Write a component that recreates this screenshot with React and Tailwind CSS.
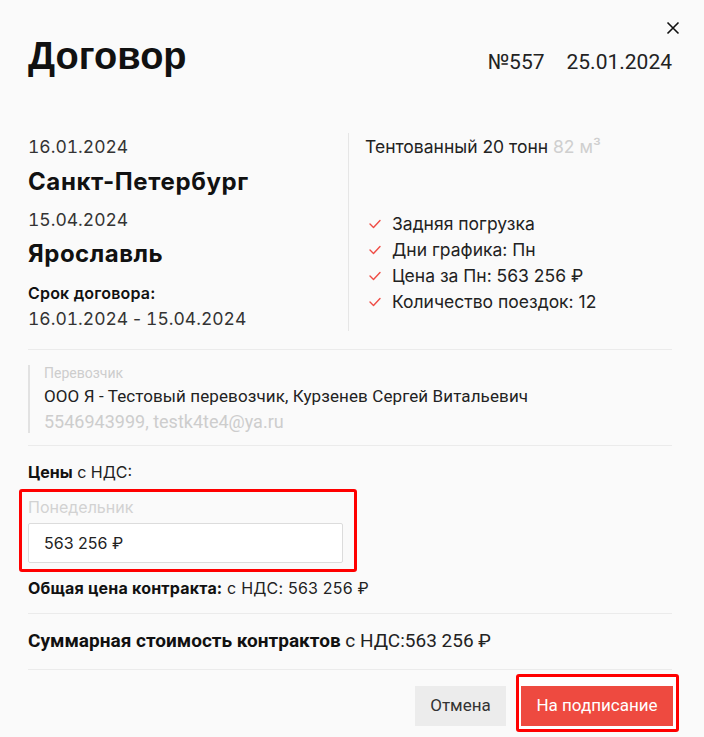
import React from "react";

const Check = () => (
  <svg width="12" height="10" viewBox="0 0 12 10" className="shrink-0">
    <polyline points="1,5 4.5,8.5 11,1.5" fill="none" stroke="#ef4c45" strokeWidth="1.4" strokeLinecap="round" strokeLinejoin="round" />
  </svg>
);

const T = ({ children }) => <span style={{ fontVariantNumeric: "tabular-nums" }}>{children}</span>;

export default function App() {
  const inter = { fontFamily: "Inter, 'Noto Sans', sans-serif" };
  const roboto = { fontFamily: "Roboto, sans-serif" };
  return (
    <div className="relative w-[704px] h-[737px] bg-[#fafafa] overflow-hidden text-[#222]">
      <button className="absolute top-[21px] right-[24px] w-[14px] h-[14px] flex items-center justify-center">
        <svg width="14" height="14" viewBox="0 0 14 14">
          <path d="M1.5 1.5 L12.5 12.5 M12.5 1.5 L1.5 12.5" stroke="#111" strokeWidth="1.6" />
        </svg>
      </button>
      <div className="flex flex-col pl-[28px] pr-[32px] pt-[36px]">
        <div className="flex items-baseline justify-between">
          <h1 className="text-[38px] leading-[40px] font-bold text-[#111]" style={{ fontFamily: "'Liberation Sans', Arial, sans-serif" }}>
            Договор
          </h1>
          <div className="flex gap-[22px] text-[21px] leading-[24px] text-[#222]" style={roboto}>
            <span>№557</span>
            <span>25.01.2024</span>
          </div>
        </div>

        <div className="mt-[57px] flex" style={inter}>
          <div className="w-[321px] border-r border-[#e6e6e6] flex flex-col pt-[2px]">
            <div className="text-[17.5px] leading-[24px] text-[#333]"><T>16.01.2024</T></div>
            <div className="mt-[8px] text-[24px] leading-[30px] font-bold tracking-[0.6px] text-[#111]">Санкт-Петербург</div>
            <div className="mt-[11px] text-[17.5px] leading-[24px] text-[#333]"><T>15.04.2024</T></div>
            <div className="mt-[7px] text-[24px] leading-[30px] font-bold tracking-[0.5px] text-[#111]">Ярославль</div>
            <div className="mt-[14px] text-[16px] leading-[20px] font-semibold tracking-[0.2px] text-[#111]">Срок договора:</div>
            <div className="mt-[4px] text-[17.5px] leading-[24px] text-[#333]">
              <T>16.01.2024</T> - <T>15.04.2024</T>
            </div>
          </div>
          <div className="flex-1 pl-[16px] pt-[2px] flex flex-col">
            <div className="text-[17.5px] leading-[24px] text-[#222]">
              Тентованный 20 тонн <span className="text-[#cfcfcf]">82 м³</span>
            </div>
            <ul className="mt-[52px] flex flex-col">
              {["Задняя погрузка", "Дни графика: Пн", "Цена за Пн: 563 256 ₽", "Количество поездок: 12"].map((t) => (
                <li key={t} className="flex items-center gap-[11px] pl-[4px] text-[17.5px] leading-[26px] text-[#222]">
                  <Check />
                  <span>{t}</span>
                </li>
              ))}
            </ul>
          </div>
        </div>

        <div className="mt-[18px] h-px bg-[#ebebeb]" />

        <div className="mt-[15px] border-l-2 border-[#e2e2e2] pl-[14px] flex flex-col" style={roboto}>
          <div className="text-[14px] leading-[16px] text-[#cdcdcd]">Перевозчик</div>
          <div className="mt-[4px] text-[17px] leading-[22px] tracking-[0.1px] text-[#222]">ООО Я - Тестовый перевозчик, Курзенев Сергей Витальевич</div>
          <div className="mt-[4px] text-[18px] leading-[22px] text-[#cdcdcd]">5546943999, testk4te4@ya.ru</div>
        </div>

        <div className="mt-[12px] h-px bg-[#ebebeb]" />

        <div className="mt-[16px] text-[16px] leading-[20px] text-[#222]" style={inter}>
          <span className="font-bold text-[#111]">Цены</span> с НДС:
        </div>

        <div className="mt-[7px] ml-[-9px] w-[338px] border-[3px] border-[#ff0000] rounded-[3px] pl-[6px] pt-[5px] pb-[6px] flex flex-col" style={inter}>
          <div className="text-[16px] leading-[20px] text-[#d2d2d2]">Понедельник</div>
          <div className="mt-[6px] w-[315px] h-[40px] bg-white border border-[#dcdcdc] rounded-[2px] flex items-center pl-[15px] text-[16px] text-[#222]">
            563 256 ₽
          </div>
        </div>

        <div className="mt-[6px] text-[16px] leading-[20px] tracking-[0.2px] text-[#222]" style={inter}>
          <span className="font-bold text-[#111]">Общая цена контракта:</span> с НДС: 563 256 ₽
        </div>

        <div className="mt-[15px] h-px bg-[#ebebeb]" />

        <div className="mt-[15px] text-[19px] leading-[24px] text-[#222]" style={roboto}>
          <span className="font-bold text-[#111]">Суммарная стоимость контрактов</span> с НДС:563 256 ₽
        </div>

        <div className="mt-[16px] h-px bg-[#ebebeb]" />

        <div className="mt-[4px] flex items-start justify-end mr-[-7px]" style={roboto}>
          <button className="mt-[12px] w-[91px] h-[40px] bg-[#ececec] text-[17px] text-[#333]">Отмена</button>
          <div className="ml-[10px] border-[3px] border-[#ff0000] rounded-[3px] bg-white pt-[9px] pl-[2px] pr-[3px] pb-[3px]">
            <button className="w-[152px] h-[40px] bg-[#ee4a40] text-white text-[17px]">На подписание</button>
          </div>
        </div>
      </div>
    </div>
  );
}
